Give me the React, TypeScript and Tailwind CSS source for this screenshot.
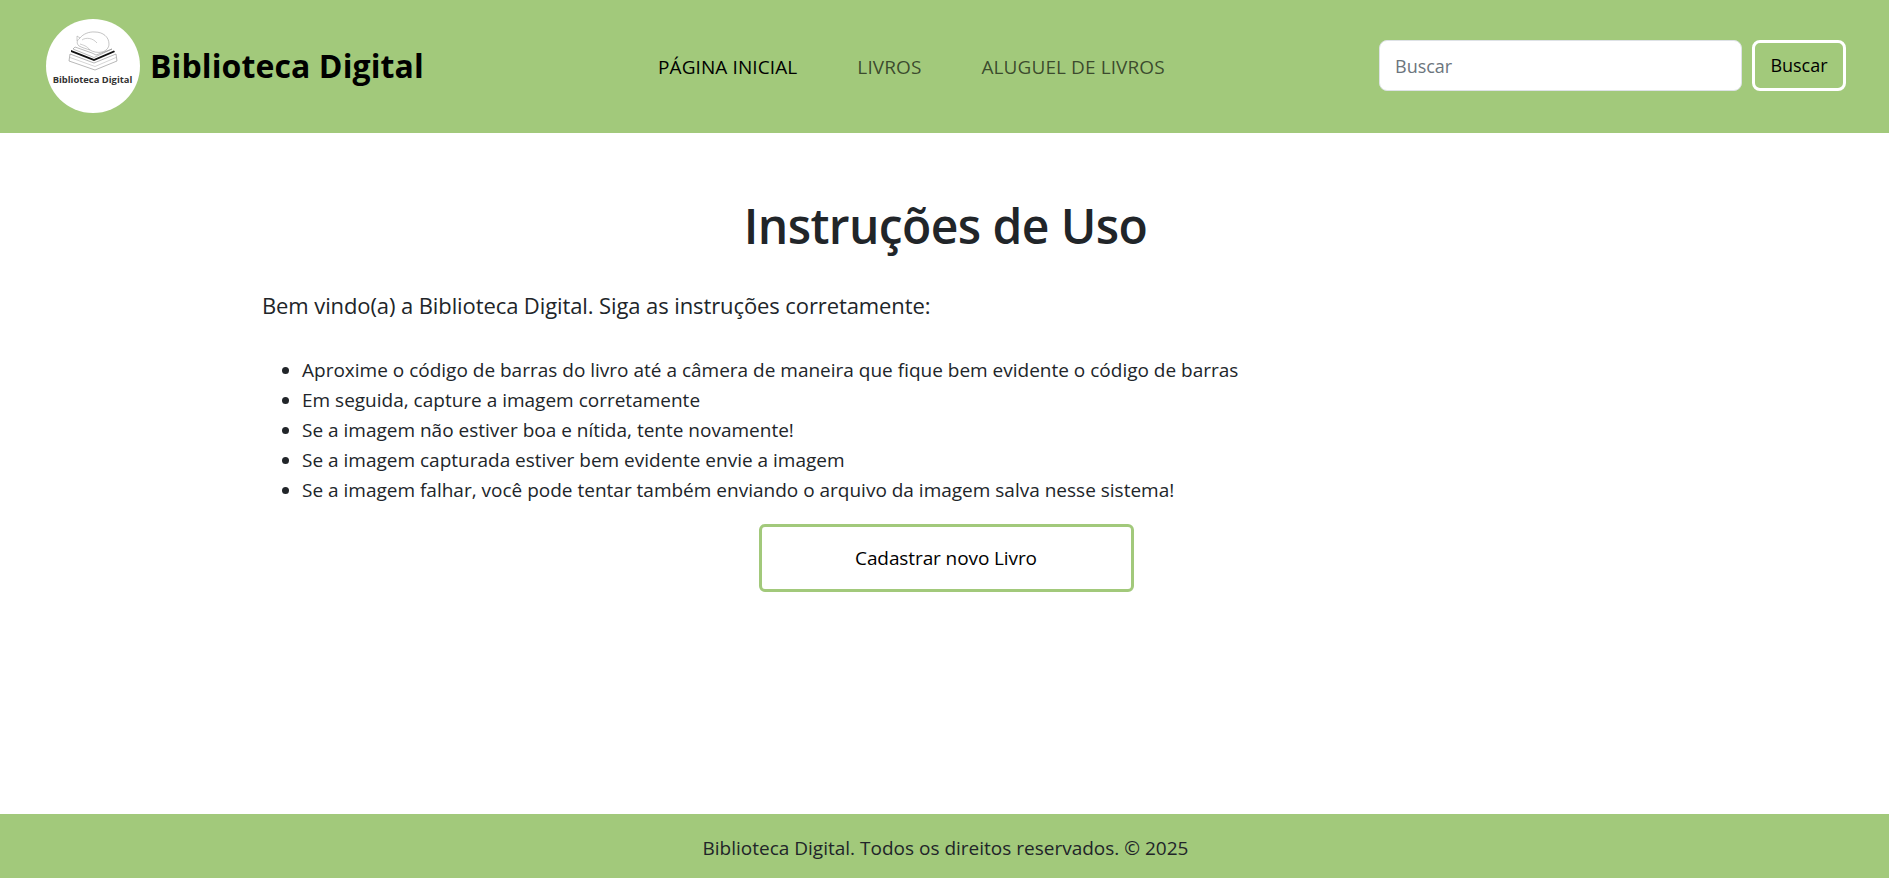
const font = { fontFamily: '"Open Sans", sans-serif' };

const Logo = () => (
  <svg viewBox="0 0 94 94" className="w-[94px] h-[94px] shrink-0">
    <circle cx="47" cy="47" r="47" fill="#fff" />
    {/* books */}
    <path d="M24 35 L48 44 L70 35 L71 42 L49 51 L23 42 Z" fill="#fff" stroke="#888" strokeWidth="0.6" />
    <path d="M24 38.5 L49 47.5 L70 38.5" fill="none" stroke="#aaa" strokeWidth="0.5" />
    <path d="M25 31 L48 40 L68 31.5 L69 33 L48 42 L25 33 Z" fill="#111" />
    <path d="M29 28 L46 34 L50 36 L66 30 L48 38.5 L27 30 Z" fill="#fff" stroke="#777" strokeWidth="0.5" />
    {/* cat */}
    <path
      d="M33 27 C30 24 31 21 34 19 C37 15 43 12.5 49 13 C57 13 63 18 63 25 C63 29 60 32 56 33 C52 34 47 33 44 31 C41 30 37 29 33 27 Z"
      fill="#fff"
      stroke="#888"
      strokeWidth="0.5"
    />
    <path d="M34 19 L31 17 L31 22 M36 21 C40 18 47 19 51 24 M44 31 C41 27 37 26 34 25" fill="none" stroke="#999" strokeWidth="0.5" />
    <text x="46.5" y="64" textAnchor="middle" fontSize="9.4" fontWeight="700" fill="#333" style={font}>
      Biblioteca Digital
    </text>
  </svg>
);

export default function App() {
  return (
    <div className="min-h-[878px] flex flex-col bg-white text-[#212529]" style={font}>
      <header className="h-[133px] bg-[#a2c97b] flex items-center pl-[46px] pr-[43px] pb-[2px]">
        <div className="flex items-center gap-[10px] w-[580px]">
          <Logo />
          <span className="text-[32px] font-bold text-black tracking-[0.1px]">Biblioteca Digital</span>
        </div>
        <nav className="flex gap-[60px] text-[19px] ml-[32px] text-black/65 pt-[3px] tracking-[0.1px]">
          <a className="text-black">PÁGINA INICIAL</a>
          <a>LIVROS</a>
          <a>ALUGUEL DE LIVROS</a>
        </nav>
        <form className="ml-auto flex gap-[10px]">
          <input
            placeholder="Buscar"
            className="w-[363px] h-[51px] rounded-[8px] bg-white border border-[#dee2e6] px-[15px] text-[18px] placeholder:text-[#6c757d]"
          />
          <button className="w-[94px] h-[51px] rounded-[8px] border-[3px] border-white text-[18px] text-black">
            Buscar
          </button>
        </form>
      </header>

      <main className="flex-1 px-[262px]">
        <h1 className="text-center text-[48px] font-semibold mt-[64px] tracking-[-0.6px] leading-[58px] pl-[2px]">Instruções de Uso</h1>
        <p className="text-[22px] mt-[34px] tracking-[-0.1px]">Bem vindo(a) a Biblioteca Digital. Siga as instruções corretamente:</p>
        <ul className="list-disc pl-[40px] mt-[33px] text-[19px] leading-[30px]">
          <li>Aproxime o código de barras do livro até a câmera de maneira que fique bem evidente o código de barras</li>
          <li>Em seguida, capture a imagem corretamente</li>
          <li>Se a imagem não estiver boa e nítida, tente novamente!</li>
          <li>Se a imagem capturada estiver bem evidente envie a imagem</li>
          <li>Se a imagem falhar, você pode tentar também enviando o arquivo da imagem salva nesse sistema!</li>
        </ul>
        <div className="flex justify-center mt-[19px] pl-[3px]">
          <button className="w-[375px] h-[68px] rounded-[6px] border-[3px] border-[#a2c97b] bg-white text-black text-[19px] tracking-[-0.1px]">
            Cadastrar novo Livro
          </button>
        </div>
      </main>

      <footer className="h-[64px] bg-[#a2c97b] flex items-center justify-center text-[19px] pt-[5px] pl-[2px]">
        Biblioteca Digital. Todos os direitos reservados. © 2025
      </footer>
    </div>
  );
}
